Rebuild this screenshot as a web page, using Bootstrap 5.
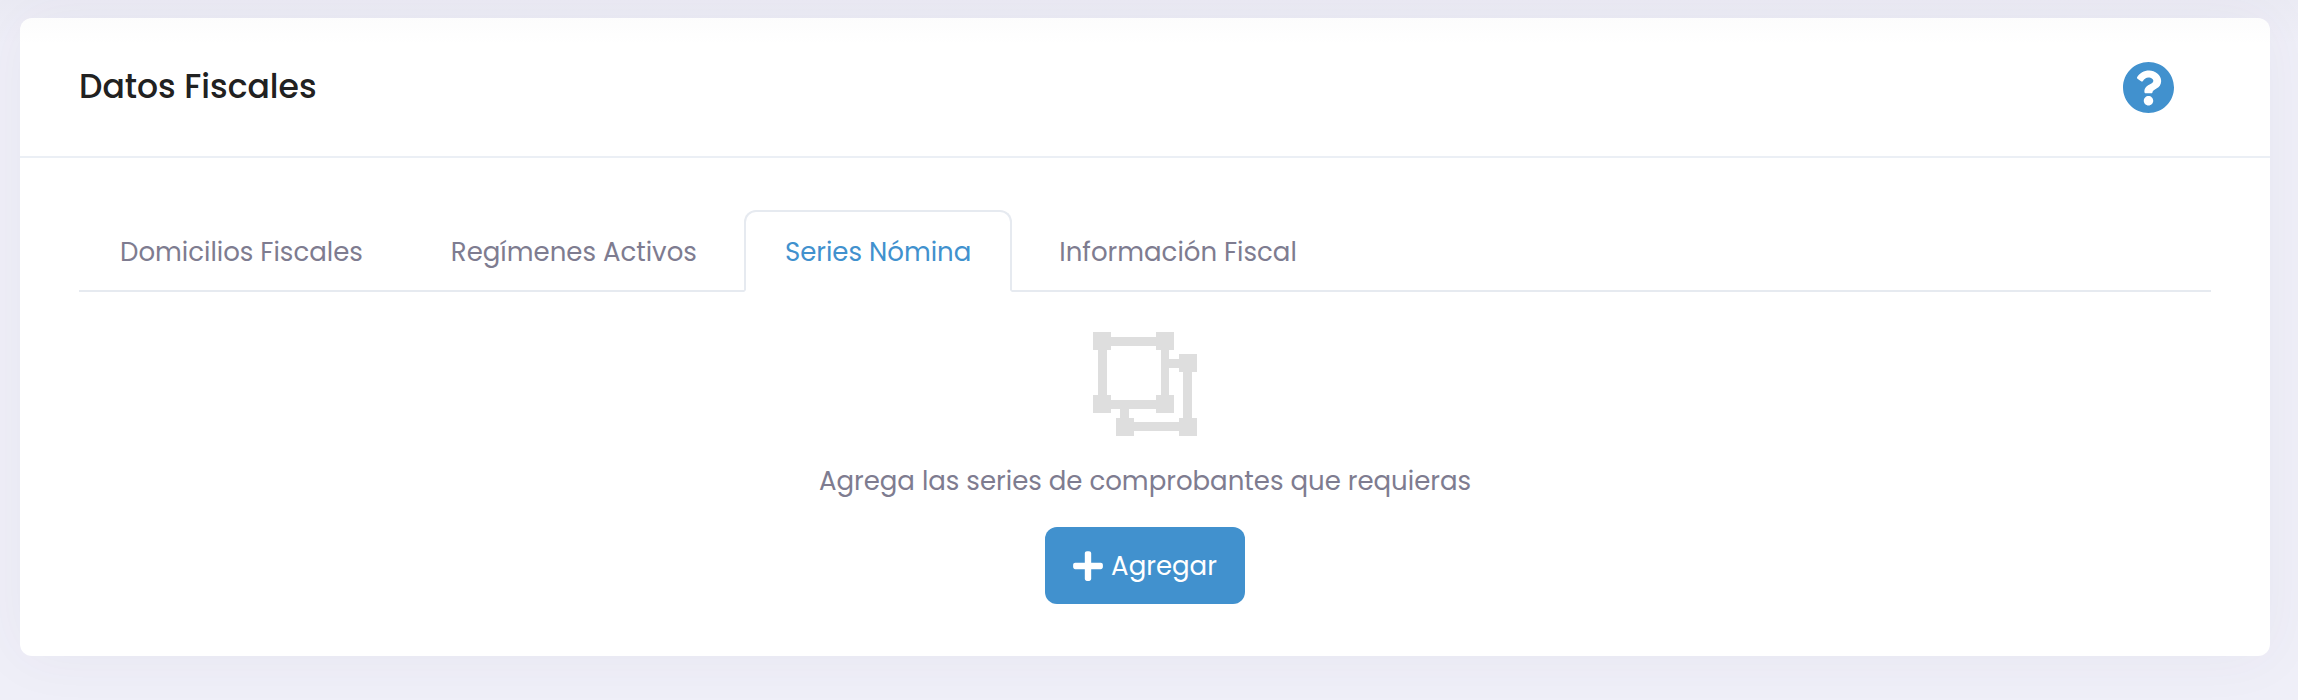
<!DOCTYPE html>
<html lang="es">
<head>
<meta charset="utf-8">
<meta name="viewport" content="width=device-width, initial-scale=1">
<title>Datos Fiscales</title>
<link href="https://cdn.jsdelivr.net/npm/bootstrap@5.3.0/dist/css/bootstrap.min.css" rel="stylesheet">
<style>
  :root { --brand: #4191ce; --muted: #7e7c90; --line: #e6eaf0; }
  body { background: #efeff8; color: var(--muted); font-family: Poppins, Inter, sans-serif; font-size: 26px; line-height: 40px; }
  body::before { content: ""; position: absolute; inset: 0 0 auto 0; height: 46px; z-index: 2; pointer-events: none;
    background: linear-gradient(rgba(60, 60, 80, .025), rgba(60, 60, 80, 0)); }
  main { padding: 18px 28px 45px 20px; }
  .panel { --bs-card-border-radius: 12px; --bs-card-inner-border-radius: 12px; box-shadow: 0 0 60px rgba(82, 63, 105, .05); }
  .panel-head { min-height: 140px; padding: 0 96px 0 59px; border-bottom: 2px solid #ebeff5; }
  .panel-head h1 { font-size: 33px; line-height: 40px; font-weight: 500; color: #212121; }
  .panel-body { padding: 52px 59px; }
  .help-btn { color: var(--brand); line-height: 0; }
  .nav-tabs { --bs-nav-tabs-border-width: 2px; --bs-nav-tabs-border-color: var(--line); --bs-nav-tabs-border-radius: 12px;
    --bs-nav-tabs-link-active-color: var(--brand); --bs-nav-tabs-link-active-border-color: var(--line) var(--line) #fff;
    --bs-nav-link-color: var(--muted); --bs-nav-link-hover-color: var(--brand); gap: 6px; }
  .nav-tabs .nav-link { padding: 20px 39px 18px; font-size: 26px; line-height: 40px; }
  .empty-state { padding-top: 40px; }
  .empty-state p { margin: 25px 0 26px; }
  .empty-icon { color: #dedede; }
  .btn-brand { --bs-btn-color: #fff; --bs-btn-bg: var(--brand); --bs-btn-hover-color: #fff; --bs-btn-hover-bg: #337fb9;
    --bs-btn-active-color: #fff; --bs-btn-active-bg: #2d73a9; --bs-btn-border-width: 0; min-height: 77px;
    --bs-btn-font-size: 26px; --bs-btn-line-height: 40px; --bs-btn-border-radius: 12px; --bs-btn-padding-x: 28px; --bs-btn-padding-y: 18px; }
</style>
</head>
<body>
<main>
  <section class="card panel border-0">
    <header class="panel-head d-flex align-items-center justify-content-between">
      <h1 class="mb-0">Datos Fiscales</h1>
      <button type="button" class="btn p-0 border-0 help-btn" aria-label="Ayuda">
        <svg width="51" height="51" viewBox="8 8 496 496" fill="currentColor" aria-hidden="true"><path d="M504 256c0 136.997-111.043 248-248 248S8 392.997 8 256C8 119.083 119.043 8 256 8s248 111.083 248 248zM262.655 90c-54.497 0-89.255 22.957-116.549 63.758-3.536 5.286-2.353 12.415 2.715 16.258l34.699 26.31c5.205 3.947 12.621 3.008 16.665-2.122 17.864-22.658 30.113-35.797 57.303-35.797 20.429 0 45.698 13.148 45.698 32.958 0 14.976-12.363 22.667-32.534 33.976C247.128 238.528 216 254.941 216 296v4c0 6.627 5.373 12 12 12h56c6.627 0 12-5.373 12-12v-1.333c0-28.462 83.186-29.647 83.186-106.667 0-58.002-60.165-102-116.531-102zM256 338c-25.365 0-46 20.635-46 46 0 25.364 20.635 46 46 46s46-20.636 46-46c0-25.364-20.635-46-46-46z"/></svg>
      </button>
    </header>
    <div class="panel-body">
      <ul class="nav nav-tabs">
        <li class="nav-item"><a class="nav-link" href="#domicilios">Domicilios Fiscales</a></li>
        <li class="nav-item"><a class="nav-link" href="#regimenes">Regímenes Activos</a></li>
        <li class="nav-item"><a class="nav-link active" aria-current="page" href="#series">Series Nómina</a></li>
        <li class="nav-item"><a class="nav-link" href="#informacion">Información Fiscal</a></li>
      </ul>
      <div id="series" class="empty-state d-flex flex-column align-items-center text-center">
        <svg class="empty-icon" width="104" height="104" viewBox="0 0 104 104" fill="currentColor" aria-hidden="true"><path d="M0 0h18v5h45V0h18v18h-5v9h10v-5h18v18h-5v46h5v18H86v-5H41v5H23V86h4v-9h-9v4H0V63h5V18H0zM18 14v4h-4v45h4v5h45v-5h5V18h-5v-4zM76 36v27h5v18H63v-4H36v9h5v4h45v-4h4V40h-4v-4z" fill-rule="evenodd"/></svg>
        <p>Agrega las series de comprobantes que requieras</p>
        <button type="button" class="btn btn-brand d-inline-flex align-items-center gap-2">
          <svg width="30" height="34" viewBox="0 0 448 512" fill="currentColor" aria-hidden="true"><path d="M416 208H272V64c0-17.67-14.33-32-32-32h-32c-17.67 0-32 14.33-32 32v144H32c-17.67 0-32 14.33-32 32v32c0 17.67 14.33 32 32 32h144v144c0 17.67 14.33 32 32 32h32c17.67 0 32-14.33 32-32V304h144c17.67 0 32-14.33 32-32v-32c0-17.67-14.33-32-32-32z"/></svg>
          Agregar
        </button>
      </div>
    </div>
  </section>
</main>
<script src="https://cdn.jsdelivr.net/npm/bootstrap@5.3.0/dist/js/bootstrap.bundle.min.js"></script>
</body>
</html>
